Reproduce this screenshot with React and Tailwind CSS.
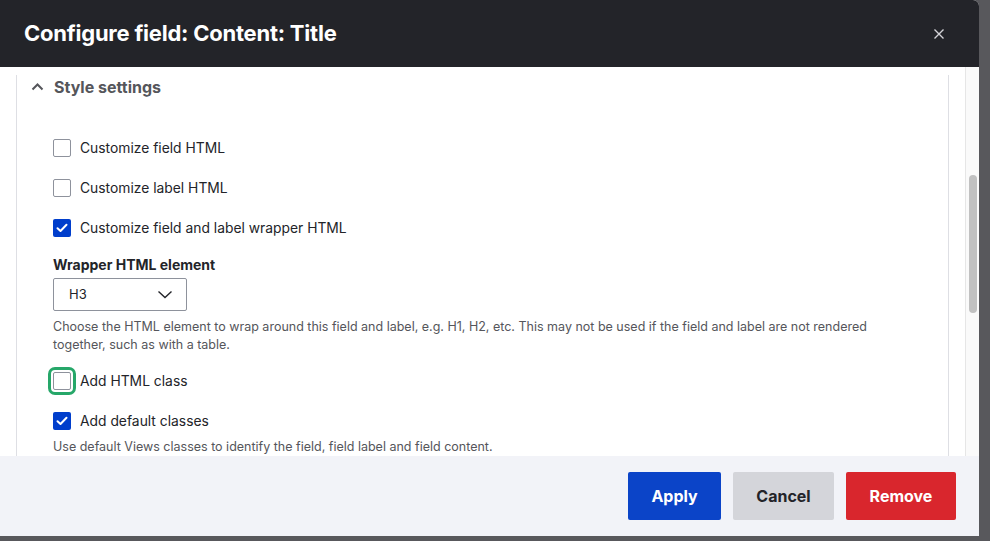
const font = { fontFamily: "Inter, 'Noto Sans', sans-serif" };

function CheckBox({ checked, focused }) {
  return (
    <span
      className={`flex h-[18px] w-[18px] shrink-0 items-center justify-center rounded-[2px] ${
        checked ? "bg-[#003ecc]" : "border border-[#8e929c] bg-white"
      } ${focused ? "outline-3 outline-offset-2 outline-[#26a769]" : ""}`}
    >
      {checked && (
        <svg width="12" height="10" viewBox="0 0 12 10" fill="none">
          <path d="M1.5 5.2 L4.5 8 L10.5 1.8" stroke="white" strokeWidth="2" strokeLinecap="round" strokeLinejoin="round" />
        </svg>
      )}
    </span>
  );
}

function CheckRow({ label, checked, focused, className = "" }) {
  return (
    <div className={`flex items-center gap-[9px] ${className}`}>
      <CheckBox checked={checked} focused={focused} />
      <span className="text-[13.85px] text-[#232429]">{label}</span>
    </div>
  );
}

export default function App() {
  return (
    <div className="h-[541px] w-[990px] overflow-hidden bg-[#58585c]" style={font}>
      <div className="flex h-[536px] w-[979px] flex-col overflow-hidden rounded-tr-[6px] bg-white">
        <header className="flex h-[67px] shrink-0 items-center justify-between bg-[#232429] pl-6 pr-[34px]">
          <h1 className="text-[22px] font-bold tracking-[-0.23px] text-white">Configure field: Content: Title</h1>
          <svg width="12" height="12" viewBox="0 0 12 12" fill="none">
            <path d="M1.5 1.5 L10.5 10.5 M10.5 1.5 L1.5 10.5" stroke="#d4d4d8" strokeWidth="1.4" />
          </svg>
        </header>

        <div className="flex min-h-0 flex-1">
          <div className="flex-1 pl-4 pr-4">
            <div className="h-full border-x border-[#dedfe4] pl-[14px]">
              <div className="mt-2 flex h-6 items-center gap-[10px]">
                <svg width="13" height="8" viewBox="0 0 13 8" fill="none">
                  <path d="M1.5 6.5 L6.5 1.5 L11.5 6.5" stroke="#55565b" strokeWidth="2" />
                </svg>
                <span className="text-[16px] font-bold text-[#55565b]">Style settings</span>
              </div>

              <div className="mt-[29px] pl-[22px]">
                <CheckRow label="Customize field HTML" className="h-10" />
                <CheckRow label="Customize label HTML" className="h-10" />
                <CheckRow label="Customize field and label wrapper HTML" checked className="h-10" />

                <div className="mt-2 text-[14px] font-bold leading-[18px] text-[#232429]">Wrapper HTML element</div>
                <div className="mt-1 flex h-[33px] w-[134px] items-center justify-between rounded-[2px] border border-[#8e929c] pl-[15px] pr-[13px]">
                  <span className="text-[13px] text-[#232429]">H3</span>
                  <svg width="16" height="9" viewBox="0 0 16 9" fill="none">
                    <path d="M1.5 1.5 L8 7.5 L14.5 1.5" stroke="#232429" strokeWidth="1.4" />
                  </svg>
                </div>
                <p className="mt-[7px] max-w-[830px] text-[12.5px] leading-[18px] text-[#55565b]">
                  Choose the HTML element to wrap around this field and label, e.g. H1, H2, etc. This may not be used if the field and label are not rendered together, such as with a table.
                </p>

                <CheckRow label="Add HTML class" focused className="mt-[13px] h-7" />
                <CheckRow label="Add default classes" checked className="mt-3 h-7" />
                <p className="mt-[3px] text-[12.5px] leading-[18px] text-[#55565b]">
                  Use default Views classes to identify the field, field label and field content.
                </p>
              </div>
            </div>
          </div>

          <div className="w-[14px] shrink-0 border-l border-[#e6e6e6] bg-[#fafafa] pt-[108px]">
            <div className="mx-auto h-[138px] w-2 rounded-full bg-[#c1c1c1]" />
          </div>
        </div>

        <footer className="flex h-20 shrink-0 items-center justify-end gap-3 bg-[#f2f3f8] pr-[23px]">
          <button className="h-12 w-[93px] rounded-[2px] bg-[#0b44c8] text-[16px] font-bold text-white">Apply</button>
          <button className="h-12 w-[101px] rounded-[2px] bg-[#d4d5da] text-[16px] font-bold text-[#232429]">Cancel</button>
          <button className="h-12 w-[110px] rounded-[2px] bg-[#d9262d] text-[16px] font-bold text-white">Remove</button>
        </footer>
      </div>
    </div>
  );
}
